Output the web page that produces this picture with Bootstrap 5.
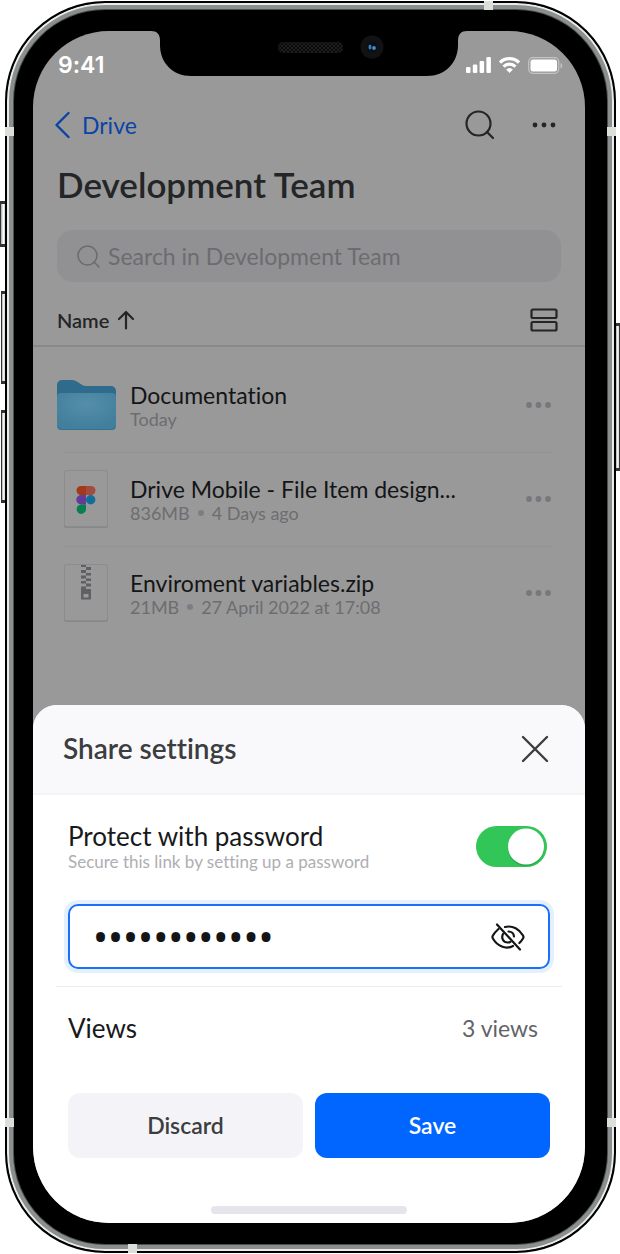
<!DOCTYPE html>
<html lang="en">
<head>
<meta charset="utf-8">
<meta name="viewport" content="width=device-width, initial-scale=1">
<title>Development Team – Share settings</title>
<link href="https://cdn.jsdelivr.net/npm/bootstrap@5.3.0/dist/css/bootstrap.min.css" rel="stylesheet">
<style>
  body { font-family: Lato, "Liberation Sans", sans-serif; font-variant-ligatures: none; background: #fff; padding: 1px 4px 1px 5px; color: #141516; }
  button { font-family: inherit; }
  svg { display: block; flex: none; }

  /* Device */
  .phone { min-height: calc(100vh - 2px); background: #000; border: 2px solid #000; border-radius: 100px; padding: 28px 29px 28px 26px;
    box-shadow: inset 0 0 0 2px #e9ecea, inset 0 0 0 6px #8c8f8f, inset 0 0 0 7px #4c4f4f; }
  .screen { background: #999; border-radius: 76px; min-height: calc(100vh - 62px); }
  .notch { left: 118px; top: 0; }
  .side-key { width: 5px; border: 1px solid #333; border-width: 3px 0 3px 1px; background: linear-gradient(90deg, #a9adab, #fff 60%, #c9cdcb); }
  .key-mute { left: -7px; top: 198px; height: 46px; }
  .key-up { left: -6px; width: 4px; top: 288px; height: 93px; }
  .key-down { left: -6px; width: 4px; top: 407px; height: 93px; }
  .key-power { right: -6px; width: 4px; top: 320px; height: 148px; border-width: 3px 1px 3px 0; }
  .band { background: #dcdfd9; width: 9px; height: 9px; }

  /* Folder view */
  .status { height: 68px; padding: 0 22px 0 25px; color: #fff; }
  .clock { font-family: Inter, "Liberation Sans", sans-serif; font-size: 23px; font-weight: 600; }
  .topbar { height: 52px; padding: 0 29px 0 22px; }
  .topbar-tools { gap: 36px; }
  .link-up { color: #0a44a6; font-size: 23px; }
  .ink { color: #242527; }
  .folder-title { font-size: 35px; line-height: 44px; font-weight: 600; padding: 11px 24px 0; color: #242527; }
  .search-box { margin: 24px 24px 0; height: 52px; border-radius: 16px; background: #919194; padding: 0 20px; color: #6c6c6f; }
  .search-box input { font-size: 23px; color: #6c6c6f; }
  .search-box input::placeholder { color: #6c6c6f; opacity: 1; }
  .sortbar { height: 65px; padding: 12px 27px 0 24px; border-bottom: 2px solid #88888d; }
  .sort-btn { font-size: 20px; font-weight: 600; color: #242527; }
  .files { padding: 12px 33px 0 23px; }
  .file-row { height: 92px; margin-bottom: 2px; }
  .file-row + .file-row::before { content: ""; position: absolute; top: -1px; left: 7px; right: 0; height: 1px; background: #929294; }
  .thumb { width: 60px; margin-right: 14px; }
  .file-name { font-size: 23px; line-height: 28px; color: #141516; }
  .file-meta { font-size: 18px; line-height: 20px; color: #6d6d71; }
  .dotmark { width: 6px; height: 6px; background: #7e7e82; }
  .dim { color: #77777c; }

  /* Bottom sheet */
  .sheet { background: #fff; border-radius: 24px 24px 72px 72px; }
  .sheet-head { height: 90px; padding: 0 36px 0 30px; background: #f9f9fc; border-bottom: 2px solid #f4f4f7; border-radius: 24px 24px 0 0; }
  .sheet-title { font-size: 28px; font-weight: 600; color: #3c3d3f; }
  .protect { padding: 25px 38px 0 35px; }
  .label-lg { font-size: 26px; line-height: 32px; color: #18191b; }
  .hint { font-size: 17px; line-height: 20px; color: #aeaeb3; }
  .form-check-input.switch-lg { width: 71px; height: 41px; border: 0; border-radius: 21px; background-color: #32c558; background-size: 100% 100%; }
  .form-check-input.switch-lg:checked { background-color: #32c558; background-position: center;
    background-image: url("data:image/svg+xml,%3csvg xmlns='http://www.w3.org/2000/svg' viewBox='0 0 71 41'%3e%3ccircle cx='50' cy='22' r='18' fill='%2329a84a'/%3e%3ccircle cx='50' cy='20.5' r='18' fill='%23fff'/%3e%3c/svg%3e"); }
  .secret { margin: 32px 35px 0; height: 65px; border: 2px solid #1a70f8; border-radius: 10px; box-shadow: 0 0 0 4px #e5f0ff; padding: 0 23px; }
  .secret input { font-family: "Noto Sans", sans-serif; font-size: 40px; line-height: 40px; color: #141516; }
  .sheet-rule { margin: 17px 23px 0; height: 1px; background: #ececef; }
  .views { height: 82px; padding: 0 47px 0 35px; }
  .views-value { font-size: 23px; color: #636367; }
  .actions { padding: 24px 35px 0; gap: 12px; }
  .action { height: 65px; border: 0; border-radius: 12px; font-size: 23px; font-weight: 600; }
  .action-light, .action-light:hover { background: #f3f3f8; color: #3c3d3f; }
  .action-main, .action-main:hover { background: #0066ff; color: #fff; }
  .home { padding: 48px 0 9px; }
  .home-bar { width: 196px; height: 8px; background: #e5e5eb; }
</style>
</head>
<body>
<div class="phone position-relative">
  <i class="side-key key-mute position-absolute"></i>
  <i class="side-key key-up position-absolute"></i>
  <i class="side-key key-down position-absolute"></i>
  <i class="side-key key-power position-absolute"></i>
  <i class="band position-absolute" style="left:-2px;top:124px"></i>
  <i class="band position-absolute" style="right:-2px;top:124px"></i>
  <i class="band position-absolute" style="left:-2px;bottom:124px"></i>
  <i class="band position-absolute" style="right:-2px;bottom:124px"></i>
  <i class="band position-absolute" style="right:121px;top:-2px"></i>
  <i class="band position-absolute" style="left:121px;bottom:-2px"></i>

  <div class="screen position-relative d-flex flex-column overflow-hidden">
    <svg class="notch position-absolute" width="316" height="46" viewBox="0 0 316 46" aria-hidden="true">
      <defs><pattern id="mesh" width="4" height="4" patternUnits="userSpaceOnUse"><rect width="4" height="4" fill="#0c0c0c"/><circle cx="1" cy="1" r="1" fill="#222"/><circle cx="3" cy="3" r="1" fill="#222"/></pattern></defs>
      <path d="M0 0c6 0 9 3 9 10v4c0 18 13 31 31 31h236c18 0 31-13 31-31v-4c0-7 3-10 9-10z" fill="#000"/>
      <rect x="127" y="11" width="65" height="11" rx="5" fill="url(#mesh)"/>
      <circle cx="221" cy="16" r="11.500" fill="#111214"/><circle cx="221" cy="16" r="5.500" fill="#06101a"/>
      <ellipse cx="219" cy="16" rx="1.500" ry="2.500" fill="#3c7cae"/><ellipse cx="223" cy="17" rx="1.800" ry="2" fill="#4b90c8"/>
    </svg>

    <div class="status d-flex align-items-center justify-content-between">
      <span class="clock">9:41</span>
      <div class="d-flex align-items-center" aria-hidden="true">
        <svg class="me-2" width="25" height="16" viewBox="0 0 25 16" fill="currentColor"><rect y="10" width="4.500" height="6" rx="1.200"/><rect x="6.800" y="7.500" width="4.500" height="8.500" rx="1.200"/><rect x="13.600" y="4" width="4.500" height="12" rx="1.200"/><rect x="20.400" width="4.500" height="16" rx="1.200"/></svg>
        <svg class="me-2" width="21" height="16" viewBox="0 0 21 16" fill="none" stroke="currentColor" stroke-width="3.200"><path d="M1 5.500a13.600 13.600 0 0 1 19 0M4.500 9.600a8.700 8.700 0 0 1 12 0"/><path d="M10.500 16l-3.400-3.500a5 5 0 0 1 6.800 0z" fill="currentColor" stroke="none"/></svg>
        <svg width="35" height="17" viewBox="0 0 35 17"><rect x=".7" y=".7" width="30" height="15.600" rx="4" fill="none" stroke="#c4c4c4" stroke-width="1.200"/><rect x="2.500" y="2.500" width="26.500" height="12" rx="2.500" fill="#fff"/><path d="M32.500 6v5.500a3 3 0 0 0 0-5.500z" fill="#c4c4c4"/></svg>
      </div>
    </div>

    <nav class="topbar d-flex align-items-center justify-content-between">
      <a href="#" class="link-up d-flex align-items-center text-decoration-none">
        <svg class="me-2" width="19" height="28" viewBox="0 0 19 28" fill="none" stroke="currentColor" stroke-width="2.400" stroke-linecap="round" stroke-linejoin="round"><path d="M13.500 2L1.500 14l12 12"/></svg>Drive</a>
      <div class="topbar-tools d-flex align-items-center ink">
        <button class="btn p-0 border-0 ink" aria-label="Search"><svg width="32" height="32" viewBox="0 0 32 32" fill="none" stroke="currentColor" stroke-width="2.200" stroke-linecap="round"><circle cx="14.500" cy="14.500" r="12"/><path d="M23 23l6 6"/></svg></button>
        <button class="btn p-0 border-0 ink" aria-label="More"><svg width="24" height="6" viewBox="0 0 24 6" fill="currentColor"><circle cx="3" cy="3" r="2.400"/><circle cx="12" cy="3" r="2.400"/><circle cx="21" cy="3" r="2.400"/></svg></button>
      </div>
    </nav>

    <h1 class="folder-title mb-0">Development Team</h1>

    <label class="search-box d-flex align-items-center">
      <svg class="me-2" width="23" height="23" viewBox="0 0 23 23" fill="none" stroke="currentColor" stroke-width="1.600" stroke-linecap="round"><circle cx="10.500" cy="10.500" r="9.500"/><path d="M17 17l5 5"/></svg>
      <input type="search" class="form-control border-0 bg-transparent shadow-none p-0" placeholder="Search in Development Team">
    </label>

    <div class="sortbar d-flex align-items-center justify-content-between">
      <button class="sort-btn btn p-0 border-0 d-flex align-items-center">Name
        <svg class="ms-2" width="18" height="20" viewBox="0 0 18 20" fill="none" stroke="currentColor" stroke-width="2.200" stroke-linecap="round" stroke-linejoin="round"><path d="M9 18.500V2M2 9l7-7 7 7"/></svg></button>
      <button class="btn p-0 border-0 ink" aria-label="Change layout"><svg width="28" height="24" viewBox="0 0 28 24" fill="none" stroke="currentColor" stroke-width="2.200"><rect x="1.500" y="1.500" width="25" height="8.500" rx="1.500"/><rect x="1.500" y="14" width="25" height="8.500" rx="1.500"/></svg></button>
    </div>

    <div class="files">
      <div class="file-row position-relative d-flex align-items-center">
        <div class="thumb">
          <svg width="60" height="51" viewBox="0 0 60 51"><defs><radialGradient id="fold" cx=".5" cy=".3" r=".65"><stop offset="0" stop-color="#548ea9"/><stop offset="1" stop-color="#427f9d"/></radialGradient></defs><path d="M1 5a5 5 0 0 1 5-5h9c8 0 9 6 15 6h25a5 5 0 0 1 5 5v20H1z" fill="#2f6b8c"/><rect x="1" y="13" width="59" height="37" rx="4" fill="url(#fold)"/><path d="M2 46a4 4 0 0 0 4 3.500h49a4 4 0 0 0 4-3.500" fill="none" stroke="#37718f"/></svg>
        </div>
        <div class="flex-grow-1"><div class="file-name">Documentation</div><div class="file-meta">Today</div></div>
        <button class="btn p-0 border-0 dim" aria-label="More options"><svg width="28" height="6" viewBox="0 0 28 6" fill="currentColor"><circle cx="5" cy="3" r="2.900"/><circle cx="14.500" cy="3" r="2.900"/><circle cx="24" cy="3" r="2.900"/></svg></button>
      </div>

      <div class="file-row position-relative d-flex align-items-center">
        <div class="thumb">
          <svg class="mx-auto" width="46" height="60" viewBox="0 0 46 60"><rect x="1" y="1.500" width="44" height="57.500" rx="2" fill="#88888c"/><rect x="1.500" y="1.500" width="43" height="56" rx="2" fill="#999" stroke="#8c8c90"/><path d="M18 17h5v9h-5a4.500 4.500 0 0 1 0-9z" fill="#a1391a"/><path d="M23 17h5a4.500 4.500 0 0 1 0 9h-5z" fill="#a44b40"/><path d="M18 26h5v9.500h-5a4.700 4.700 0 0 1 0-9.500z" fill="#653b99"/><circle cx="27.700" cy="30.700" r="4.700" fill="#106e99"/><path d="M18 35.500h5V40a4.700 4.700 0 1 1-5-4.500z" fill="#097f4e"/></svg>
        </div>
        <div class="flex-grow-1"><div class="file-name">Drive Mobile - File Item design...</div><div class="file-meta d-flex align-items-center"><span>836MB</span><i class="dotmark rounded-circle mx-2"></i><span>4 Days ago</span></div></div>
        <button class="btn p-0 border-0 dim" aria-label="More options"><svg width="28" height="6" viewBox="0 0 28 6" fill="currentColor"><circle cx="5" cy="3" r="2.900"/><circle cx="14.500" cy="3" r="2.900"/><circle cx="24" cy="3" r="2.900"/></svg></button>
      </div>

      <div class="file-row position-relative d-flex align-items-center">
        <div class="thumb">
          <svg class="mx-auto" width="46" height="60" viewBox="0 0 46 60"><rect x="1" y="1.500" width="44" height="57.500" rx="2" fill="#88888c"/><rect x="1.500" y="1.500" width="43" height="56" rx="2" fill="#999" stroke="#8c8c90"/><g fill="#606064"><path d="M18 2h5v2h-5zM23 4h5v3h-5zM18 7h5v3h-5zM23 10h5v2.500h-5zM18 12.500h5v3h-5zM23 15.500h5v2.500h-5zM18 18h5v2.500h-5zM23 20.500h5v3h-5z"/><path fill-rule="evenodd" d="M18 23.500h5V26h5v10.500H18zM20.500 31v3.500h5V31z"/></g></svg>
        </div>
        <div class="flex-grow-1"><div class="file-name">Enviroment variables.zip</div><div class="file-meta d-flex align-items-center"><span>21MB</span><i class="dotmark rounded-circle mx-2"></i><span>27 April 2022 at 17:08</span></div></div>
        <button class="btn p-0 border-0 dim" aria-label="More options"><svg width="28" height="6" viewBox="0 0 28 6" fill="currentColor"><circle cx="5" cy="3" r="2.900"/><circle cx="14.500" cy="3" r="2.900"/><circle cx="24" cy="3" r="2.900"/></svg></button>
      </div>
    </div>

    <section class="sheet mt-auto" aria-labelledby="sheetTitle">
      <header class="sheet-head d-flex align-items-center justify-content-between">
        <h2 class="sheet-title mb-0" id="sheetTitle">Share settings</h2>
        <button class="btn p-0 border-0" aria-label="Close"><svg width="28" height="28" viewBox="0 0 28 28" fill="none" stroke="#3c3d3f" stroke-width="2.400" stroke-linecap="round"><path d="M2 2l24 24M26 2L2 26"/></svg></button>
      </header>
      <div class="protect d-flex align-items-center justify-content-between">
        <div><label class="label-lg d-block" for="protect">Protect with password</label><div class="hint">Secure this link by setting up a password</div></div>
        <div class="form-check form-switch p-0 m-0"><input class="form-check-input switch-lg m-0 float-none d-block" type="checkbox" role="switch" id="protect" checked></div>
      </div>
      <div class="secret d-flex align-items-center">
        <input type="password" class="form-control border-0 bg-transparent shadow-none p-0" aria-label="Password" value="abcdefghijkl">
        <button class="btn p-0 border-0" aria-label="Show password"><svg width="34" height="28" viewBox="0 0 34 28" fill="none" stroke="#141516" stroke-width="2.200" stroke-linecap="round" stroke-linejoin="round"><path d="M6 1.500l23 25"/><path d="M14 4C22 2 28.500 6.500 32 12.500c.6 1 .6 2 0 3-1 1.700-2.200 3.200-3.600 4.500"/><path d="M7.500 6C5.200 8 3.300 10.200 1.900 12.500c-.6 1-.6 2 0 3C6.300 23 14.500 27 22 23"/><path d="M12 11c-2 4 .2 8.500 4.700 8.500 1 0 2-.2 2.700-.7M17.500 8.500c3 0 5.300 2 5.500 5"/></svg></button>
      </div>
      <div class="sheet-rule"></div>
      <div class="views d-flex align-items-center justify-content-between"><span class="label-lg">Views</span><span class="views-value">3 views</span></div>
      <div class="actions d-flex">
        <button class="action action-light btn flex-fill w-50">Discard</button>
        <button class="action action-main btn flex-fill w-50">Save</button>
      </div>
      <div class="home"><div class="home-bar rounded-pill mx-auto"></div></div>
    </section>
  </div>
</div>
<script src="https://cdn.jsdelivr.net/npm/bootstrap@5.3.0/dist/js/bootstrap.bundle.min.js"></script>
</body>
</html>
